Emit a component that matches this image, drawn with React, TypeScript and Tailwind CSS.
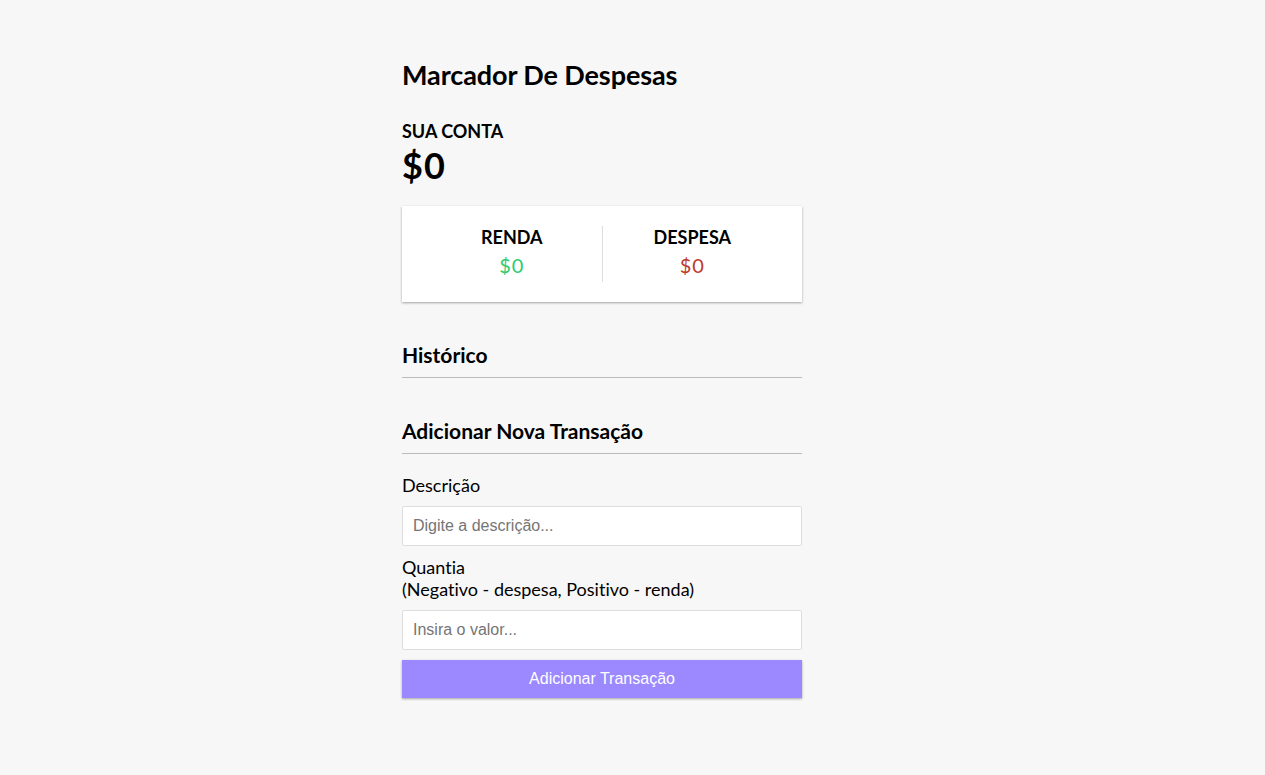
export default function App() {
  return (
    <div className="min-h-screen bg-[#f7f7f7] font-['Lato',sans-serif] text-black [font-variant-ligatures:none]">
      <div className="w-[400px] ml-[402px] pt-[60px]">
        <h2 className="text-[27px] font-bold leading-[29px] tracking-[-0.1px] m-0">Marcador De Despesas</h2>
        <div className="mt-[32px]">
          <h4 className="text-[18px] font-bold leading-[21px] uppercase m-0">Sua Conta</h4>
          <h1 className="text-[36px] font-bold leading-[38px] tracking-[1px] mt-[4px]">$0</h1>
        </div>
        <div className="mt-[22px] bg-white p-[20px] flex shadow-[0_1px_3px_rgba(0,0,0,0.12),0_1px_2px_rgba(0,0,0,0.24)]">
          <div className="flex-1 text-center border-r border-[#dedede]">
            <h4 className="text-[18px] font-bold leading-[22px] uppercase">Renda</h4>
            <p className="text-[20px] leading-[24px] tracking-[1px] my-[5px] text-[#2ecc71]">$0</p>
          </div>
          <div className="flex-1 text-center">
            <h4 className="text-[18px] font-bold leading-[22px] uppercase">Despesa</h4>
            <p className="text-[20px] leading-[24px] tracking-[1px] my-[5px] text-[#c0392b]">$0</p>
          </div>
        </div>
        <h3 className="mt-[41px] text-[21px] font-bold leading-[24px] pb-[10px] border-b border-[#bbb]">Histórico</h3>
        <h3 className="mt-[41px] text-[21px] font-bold leading-[24px] pb-[10px] border-b border-[#bbb]">Adicionar Nova Transação</h3>
        <div className="mt-[20px]">
          <label className="block text-[18px] leading-[22px]">Descrição</label>
          <input
            type="text"
            placeholder="Digite a descrição..."
            className="block w-full mt-[10px] h-[40px] bg-white border border-[#dedede] rounded-[2px] px-[10px] text-[16px] font-['Liberation_Sans',Arial,sans-serif] placeholder:text-[#757575] outline-none"
          />
        </div>
        <div className="mt-[10px]">
          <label className="block text-[18px] leading-[22px]">
            Quantia <br />
            (Negativo - despesa, Positivo - renda)
          </label>
          <input
            type="number"
            placeholder="Insira o valor..."
            className="block w-full mt-[10px] h-[40px] bg-white border border-[#dedede] rounded-[2px] px-[10px] text-[16px] font-['Liberation_Sans',Arial,sans-serif] placeholder:text-[#757575] outline-none"
          />
        </div>
        <button className="block w-full mt-[10px] h-[38px] bg-[#9c88ff] text-white text-[16px] font-['Liberation_Sans',Arial,sans-serif] shadow-[0_1px_3px_rgba(0,0,0,0.12),0_1px_2px_rgba(0,0,0,0.24)]">
          Adicionar Transação
        </button>
      </div>
    </div>
  );
}
